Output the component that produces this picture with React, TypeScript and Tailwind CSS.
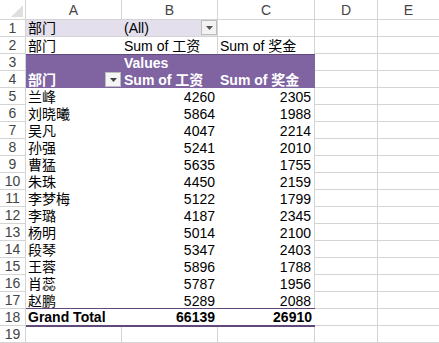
import React from "react";

const FONT = "font-['Liberation_Sans','Noto_Sans_CJK_SC',sans-serif]";

const names: [string, number, number][] = [
  ["兰峰", 4260, 2305],
  ["刘晓曦", 5864, 1988],
  ["吴凡", 4047, 2214],
  ["孙强", 5241, 2010],
  ["曹猛", 5635, 1755],
  ["朱珠", 4450, 2159],
  ["李梦梅", 5122, 1799],
  ["李璐", 4187, 2345],
  ["杨明", 5014, 2100],
  ["段琴", 5347, 2403],
  ["王蓉", 5896, 1788],
  ["肖蕊", 5787, 1956],
  ["赵鹏", 5289, 2088],
];

function Arrow({ color = "#444" }: { color?: string }) {
  return (
    <svg width="7" height="4" viewBox="0 0 7 4">
      <polygon points="0,0 7,0 3.5,4" fill={color} />
    </svg>
  );
}

function RowNum({ n }: { n: number }) {
  return (
    <div className="w-[26px] shrink-0 border-r border-b border-[#d4d4d4] flex items-center justify-center text-[14px] text-[#444] bg-white">
      {n}
    </div>
  );
}

function DE() {
  return (
    <>
      <div className="w-[63px] shrink-0 border-r border-b border-[#d4d4d4]" />
      <div className="flex-1 border-b border-[#d4d4d4]" />
    </>
  );
}

export default function App() {
  return (
    <div className={`${FONT} w-[439px] h-[343px] overflow-hidden bg-white text-[14px] text-black leading-[16px]`}>
      {/* column headers */}
      <div className="flex h-[20px]">
        <div className="w-[26px] shrink-0 border-r border-b border-[#d4d4d4] relative">
          <svg className="absolute right-[2px] bottom-[2px]" width="12" height="12" viewBox="0 0 12 12">
            <polygon points="12,0 12,12 0,12" fill="#dfdfdf" />
          </svg>
        </div>
        {["A", "B", "C", "D"].map((c, i) => (
          <div
            key={c}
            className={`${i === 3 ? "w-[63px]" : i === 2 ? "w-[97px]" : "w-[96px]"} shrink-0 border-r border-b border-[#d4d4d4] flex items-center justify-center text-[#444] text-[14px]`}
          >
            {c}
          </div>
        ))}
        <div className="flex-1 border-b border-[#d4d4d4] flex items-center justify-center text-[#444] text-[14px]">E</div>
      </div>

      {/* row 1 */}
      <div className="flex h-[17px]">
        <RowNum n={1} />
        <div className="w-[192px] shrink-0 bg-[#e4dfec] border-r border-b border-[#d4d4d4] flex">
          <div className="w-[96px] pl-[2px] flex items-center">部门</div>
          <div className="flex-1 pl-[2px] flex items-center justify-between pr-[0px]">
            <span>(All)</span>
            <div className="w-[16px] h-[15px] -mt-[1px] border border-[#bdbdbd] bg-[#f3f3f3] flex items-center justify-center">
              <Arrow color="#555" />
            </div>
          </div>
        </div>
        <div className="w-[97px] shrink-0 border-r border-b border-[#d4d4d4]" />
        <DE />
      </div>

      {/* row 2 */}
      <div className="flex h-[17px]">
        <RowNum n={2} />
        <div className="w-[96px] shrink-0 pl-[2px] flex items-center">部门</div>
        <div className="w-[96px] shrink-0 pl-[2px] border-r border-[#d4d4d4] flex items-center">Sum of 工资</div>
        <div className="w-[97px] shrink-0 pl-[2px] border-r border-[#d4d4d4] flex items-center">Sum of 奖金</div>
        <DE />
      </div>

      {/* rows 3-4 header block */}
      <div className="flex h-[34px]">
        <div className="w-[26px] shrink-0 flex flex-col">
          <div className="h-[17px] border-r border-b border-[#d4d4d4] flex items-center justify-center text-[#444]">3</div>
          <div className="h-[17px] border-r border-b border-[#d4d4d4] flex items-center justify-center text-[#444]">4</div>
        </div>
        <div className="w-[289px] shrink-0 bg-[#8064a2] border-t border-[#60497a] text-white font-bold flex flex-col">
          <div className="h-[16px] flex">
            <div className="w-[96px]" />
            <div className="w-[96px] pl-[2px] flex items-center">Values</div>
          </div>
          <div className="h-[17px] flex">
            <div className="w-[96px] pl-[2px] flex items-center justify-between pr-[1px]">
              <span>部门</span>
              <div className="w-[16px] h-[15px] border border-[#bdbdbd] bg-[#f5f5f5] flex items-center justify-center">
                <Arrow color="#444" />
              </div>
            </div>
            <div className="w-[96px] pl-[2px] flex items-center">Sum of 工资</div>
            <div className="flex-1 pl-[2px] flex items-center">Sum of 奖金</div>
          </div>
        </div>
        <div className="flex-1 flex flex-col">
          <div className="h-[17px] flex"><DE /></div>
          <div className="h-[17px] flex"><DE /></div>
        </div>
      </div>

      {/* data rows */}
      {names.map(([n, a, b], i) => (
        <div key={n} className="flex h-[17px]">
          <RowNum n={i + 5} />
          <div className="w-[96px] shrink-0 pl-[2px] flex items-center">{n}</div>
          <div className="w-[96px] shrink-0 pr-[3px] flex items-center justify-end">{a}</div>
          <div className="w-[97px] shrink-0 pr-[3px] border-r border-[#d4d4d4] flex items-center justify-end">{b}</div>
          <DE />
        </div>
      ))}

      {/* row 18 */}
      <div className="flex h-[17px]">
        <RowNum n={18} />
        <div className="w-[289px] shrink-0 flex font-bold border-t border-[#60497a] border-b-2 border-b-[#60497a] -mt-[1px] h-[19px] relative">
          <div className="w-[96px] pl-[2px] flex items-center">Grand Total</div>
          <div className="w-[96px] pr-[3px] flex items-center justify-end">66139</div>
          <div className="flex-1 pr-[3px] flex items-center justify-end">26910</div>
        </div>
        <DE />
      </div>

      {/* row 19 */}
      <div className="flex h-[17px]">
        <RowNum n={19} />
        <div className="w-[96px] shrink-0 border-r border-b border-[#d4d4d4]" />
        <div className="w-[96px] shrink-0 border-r border-b border-[#d4d4d4]" />
        <div className="w-[97px] shrink-0 border-r border-b border-[#d4d4d4]" />
        <DE />
      </div>
    </div>
  );
}
